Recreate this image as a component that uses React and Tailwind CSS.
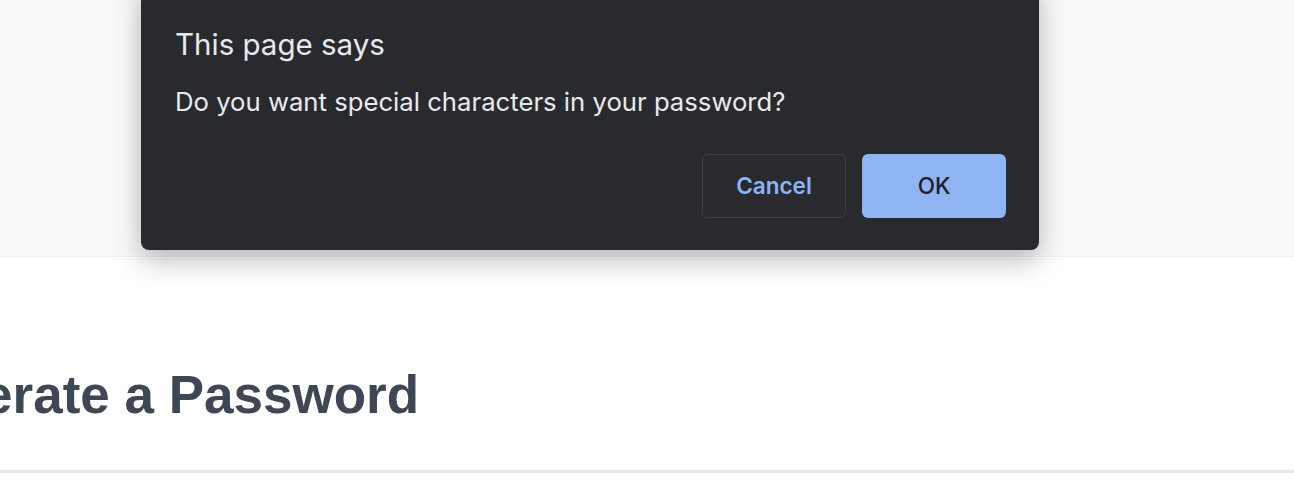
export default function App() {
  return (
    <div className="relative h-[488px] w-[1294px] overflow-hidden bg-white" style={{ fontFamily: "Inter, 'Noto Sans', sans-serif" }}>
      {/* Page behind the alert */}
      <div className="h-[257px] border-b border-[#eef0f3] bg-[#f8f9fb]" />
      <div className="pt-[111px]">
        <h1
          className="ml-[-120px] whitespace-nowrap text-[53px] font-bold leading-none text-[#3e4854]"
          style={{ fontFamily: "'Liberation Sans', Arial, sans-serif" }}
        >
          Generate a Password
        </h1>
        <div className="mt-[49px] h-[3px] bg-[#e6e7e9]" />
      </div>

      {/* Alert dialog */}
      <div className="absolute left-[141px] top-[-20px] w-[898px] rounded-b-[8px] bg-[#292a2e] pl-[34px] pr-[33px] pb-[32px] pt-[44px] shadow-[0_10px_28px_rgba(0,0,0,0.28)]">
        <div className="text-[29.5px] leading-[40px] text-[#e8eaed]">This page says</div>
        <div className="mt-[21px] text-[25.7px] leading-[34px] text-[#e8eaed]">
          Do you want special characters in your password?
        </div>
        <div className="mt-[35px] flex justify-end gap-[16px]">
          <button className="h-[64px] w-[144px] rounded-[6px] border border-[#3d3e43] text-[22.5px] font-semibold text-[#8ab4f8]">
            Cancel
          </button>
          <button className="h-[64px] w-[144px] rounded-[6px] bg-[#8fb4f3] text-[22.5px] font-medium text-[#202124]">
            OK
          </button>
        </div>
      </div>
    </div>
  );
}
